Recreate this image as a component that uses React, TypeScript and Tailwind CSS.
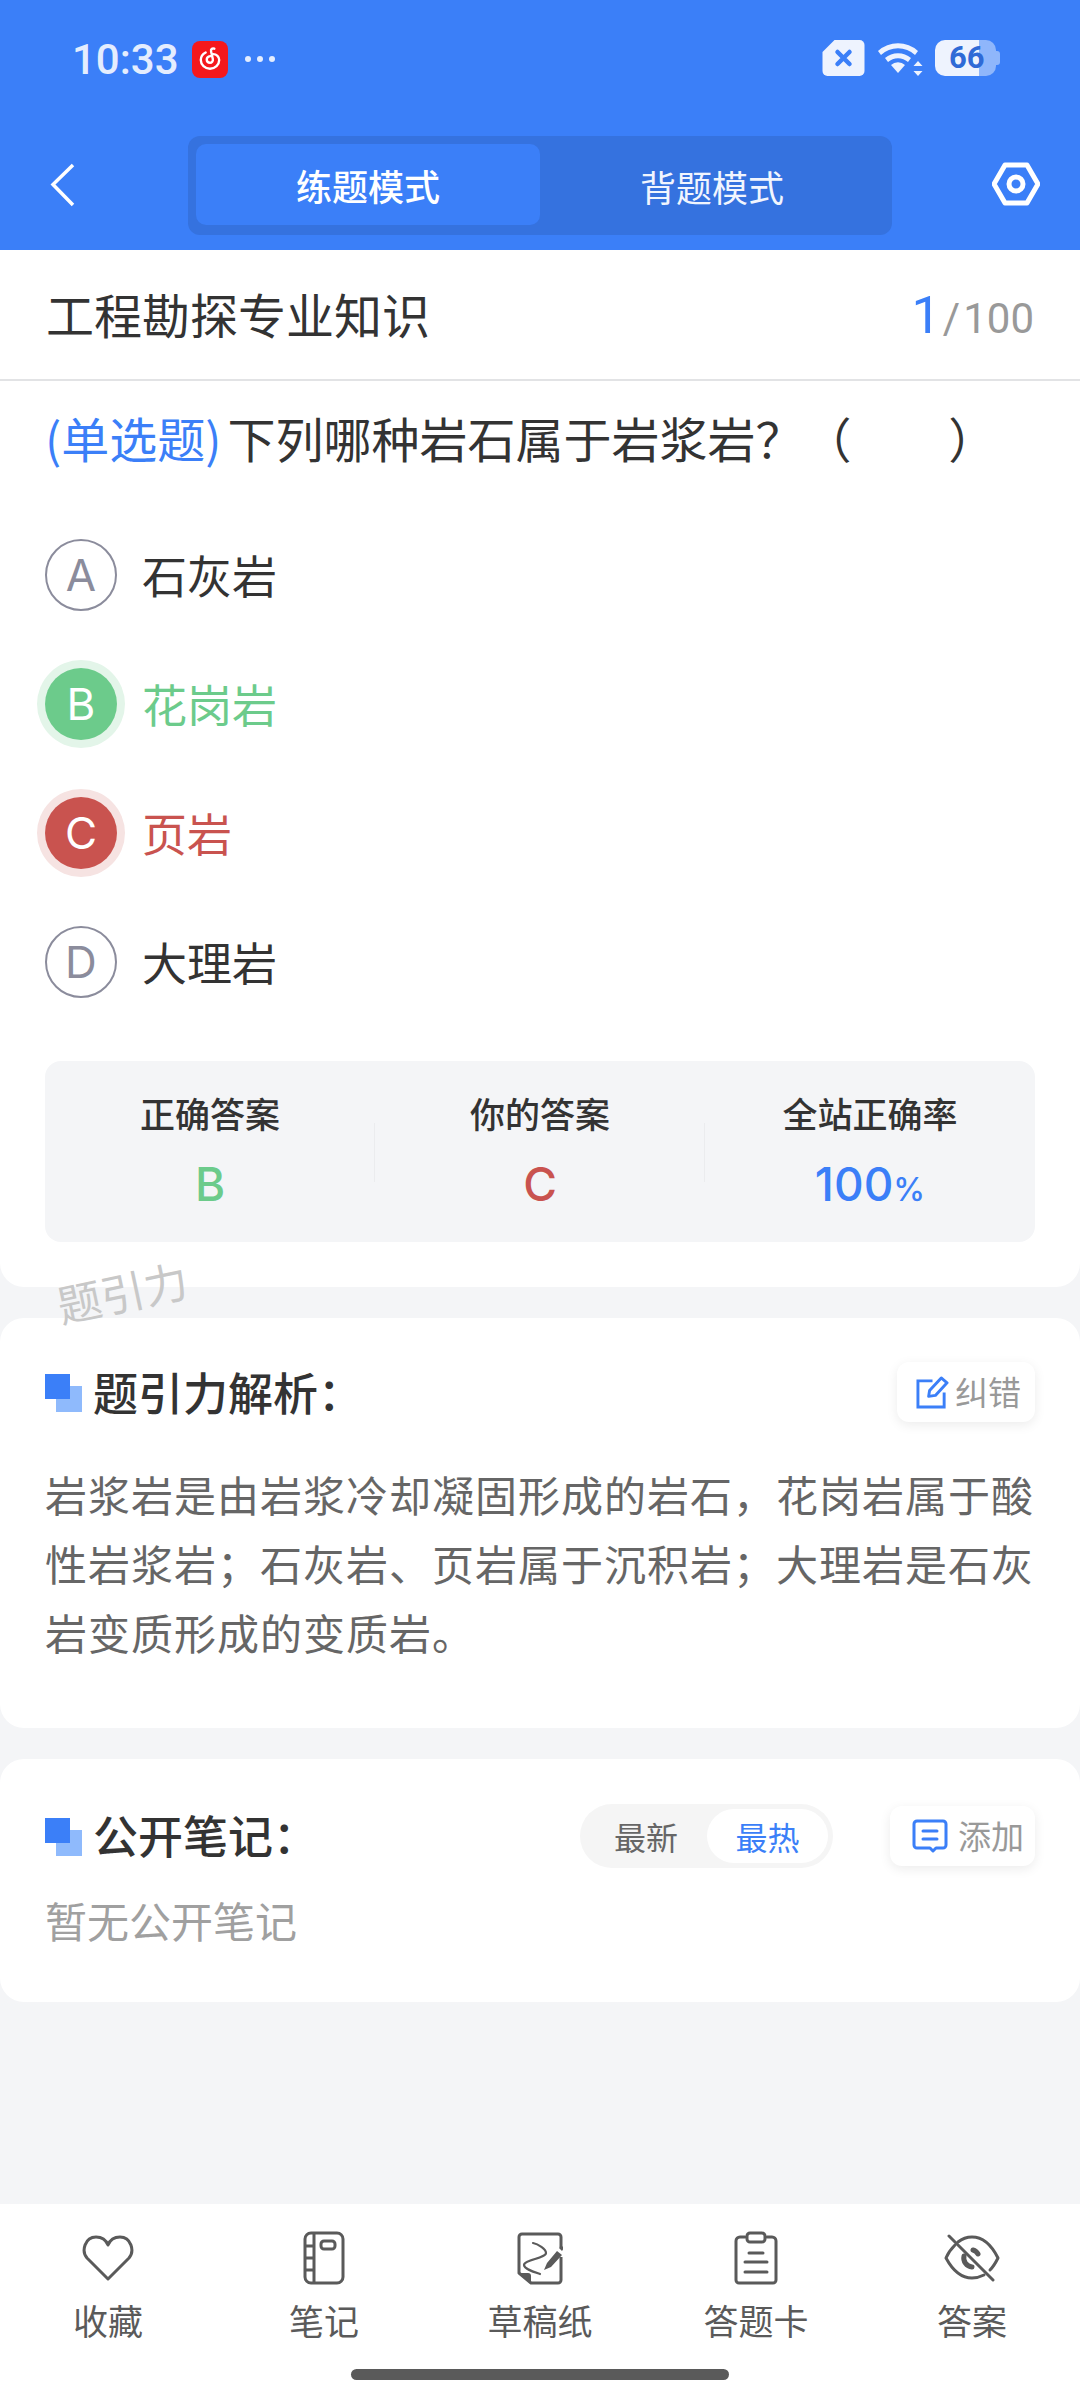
const font = { fontFamily: '"Noto Sans CJK SC", "Noto Sans", sans-serif' };
const latin = { fontFamily: '"Inter", "Noto Sans", sans-serif' };

function Square() {
  return (
    <span className="relative block w-[36px] h-[37px] shrink-0">
      <span className="absolute left-[11px] top-[12px] w-[26px] h-[26px] bg-[#8fbafc]" />
      <span className="absolute left-0 top-0 w-[25px] h-[25px] bg-[#3b7ff8]" />
    </span>
  );
}

function Option({ letter, text, state }: { letter: string; text: string; state?: "ok" | "bad" }) {
  const circle =
    state === "ok"
      ? "bg-[#6ccb8b] text-white shadow-[0_0_0_8px_#e3f5e9]"
      : state === "bad"
        ? "bg-[#c9534f] text-white shadow-[0_0_0_8px_#f6e3e2]"
        : "border-2 border-[#8b8c9c] text-[#8b8c9c]";
  const label = state === "ok" ? "text-[#6ccb8b]" : state === "bad" ? "text-[#c9534f]" : "text-[#333333]";
  return (
    <div className="flex items-center h-[129px]">
      <div style={latin} className={`w-[72px] h-[72px] rounded-full flex items-center justify-center text-[44px] ${circle}`}>{letter}</div>
      <div className={`ml-[25px] text-[45px] leading-none ${label}`}>{text}</div>
    </div>
  );
}

function Stat({ title, children, line }: { title: string; children: React.ReactNode; line?: boolean }) {
  return (
    <div className="relative flex-1 flex flex-col items-center pt-[29px]">
      <div className="text-[35px] leading-[46px] font-medium text-[#333333]">{title}</div>
      <div style={latin} className="mt-[20px] leading-[56px] text-[46px] font-medium">{children}</div>
      {line && <div className="absolute right-0 top-[62px] w-[1px] h-[59px] bg-[#ebecee]" />}
    </div>
  );
}

function NavItem({ label, children }: { label: string; children: React.ReactNode }) {
  return (
    <div className="flex-1 flex flex-col items-center">
      <div className="w-[60px] h-[60px] flex items-center justify-center">{children}</div>
      <div className="mt-[9px] text-[35px] leading-[46px] text-[#5a5a5a]">{label}</div>
    </div>
  );
}

export default function App() {
  return (
    <div style={font} className="w-[1080px] h-[2400px] bg-[#f4f5f7] flex flex-col overflow-hidden relative">
      <div className="bg-[#3b7ff8] h-[250px] shrink-0 flex flex-col">
        <div className="h-[136px] shrink-0 flex items-start justify-between pl-[72px] pr-[80px] pt-[40px]">
          <div className="flex items-center h-[38px]">
            <span className="text-[42px] font-medium text-[#e4edfe]" style={{ fontFamily: '"Roboto", sans-serif' }}>10:33</span>
            <span className="ml-[13px] w-[36px] h-[37px] rounded-[8px] bg-[#f5181c] flex items-center justify-center">
              <svg viewBox="0 0 24 24" className="w-[26px] h-[26px]" fill="none" stroke="white" strokeWidth="2.2" strokeLinecap="round">
                <path d="M16 2.500c-2-.6-3.500.5-3 2.500l1.600 7c.4 2-1 3.500-2.600 3.500-1.800 0-3-1.300-3-3 0-1.800 1.500-3 3.200-3.200M8 6C5 7.500 3.500 10 3.500 13c0 4.500 3.800 8 8.500 8s8.500-3.500 8.500-8c0-3-2.500-5.500-5.500-5.500" />
              </svg>
            </span>
            <span className="ml-[17px] flex gap-[6px]">
              <span className="w-[6px] h-[6px] rounded-full bg-[#e4edfe]" />
              <span className="w-[6px] h-[6px] rounded-full bg-[#e4edfe]" />
              <span className="w-[6px] h-[6px] rounded-full bg-[#e4edfe]" />
            </span>
          </div>
          <div className="flex items-center h-[36px] gap-[11px]">
            <svg viewBox="0 0 42 36" className="w-[43px] h-[36px]">
              <path d="M12 0h25a5 5 0 0 1 5 5v26a5 5 0 0 1-5 5H5a5 5 0 0 1-5-5V12z" fill="#eef3fe" />
              <path d="M15 12l12 12M27 12L15 24" stroke="#3b7ff8" strokeWidth="4.500" strokeLinecap="round" />
            </svg>
            <svg viewBox="0 0 46 36" className="w-[48px] h-[36px]">
              <path d="M1 11a30 30 0 0 1 40 0l-3 4a25 25 0 0 0-34 0zM8 18a20 20 0 0 1 26 0l-3 4a15 15 0 0 0-20 0zM14 25a10 10 0 0 1 14 0l-7 8z" fill="#eef3fe" />
              <path d="M41 21l4.500 5h-9zM41 36l4.500-5h-9z" fill="#eef3fe" />
            </svg>
            <span className="relative block w-[65px] h-[36px]">
              <span className="absolute left-[42px] top-0 w-[19px] h-[36px] rounded-r-[10px] bg-[#8fb6fb]" />
              <span className="absolute right-0 top-[11px] w-[4px] h-[14px] rounded-r-[3px] bg-[#8fb6fb]" />
              <span className="absolute left-0 top-0 w-[44px] h-[36px] rounded-l-[10px] bg-[#eef3fe]" />
              <span className="absolute left-[14px] top-0 text-[31px] leading-[36px] font-bold text-[#2f6ad6]" style={{ fontFamily: '"Roboto", sans-serif' }}>66</span>
            </span>
          </div>
        </div>
        <div className="flex items-start relative">
          <svg viewBox="0 0 26 44" className="absolute left-[50px] top-[27px] w-[26px] h-[44px]" fill="none" stroke="white" strokeWidth="3.500">
            <path d="M23 2L3 21.500 23 42" />
          </svg>
          <div className="ml-[188px] w-[704px] h-[99px] rounded-[12px] bg-[#3572df] p-[8px] flex items-stretch">
            <div className="w-[344px] h-[81px] rounded-[10px] bg-[#3b7ff8] flex items-center justify-center text-[36px] font-medium text-white">练题模式</div>
            <div className="flex-1 flex items-center justify-center text-[36px] text-[#f1f5fe]">背题模式</div>
          </div>
          <svg viewBox="0 0 48 44" className="absolute left-[992px] top-[26px] w-[48px] h-[44px]" fill="none" stroke="white" strokeWidth="5" strokeLinejoin="round">
            <path d="M13 3h22l11 19-11 19H13L2 22z" />
            <circle cx="24" cy="22" r="7" />
          </svg>
        </div>
      </div>

      <div className="bg-white rounded-b-[24px] px-[45px] h-[1037px] shrink-0 relative">
        <div className="-mx-[45px] px-[46px] h-[131px] border-b-2 border-[#e2e3e5] flex items-center justify-between">
          <div className="text-[48px] leading-[64px] text-[#333333] -mt-[3px]">工程勘探专业知识</div>
          <div className="flex items-baseline text-[#999999] mt-[3px]" style={{ fontFamily: '"Roboto", sans-serif' }}>
            <span className="text-[52px] text-[#3b7ff8]">1</span>
            <span className="ml-[2px] text-[42px]">/</span>
            <span className="ml-[3px] text-[42px]">100</span>
          </div>
        </div>
        <div className="h-[76px] mt-[18px] flex items-center text-[48px] text-[#333333] whitespace-pre">
          <span className="text-[#3b7ff8]">(单选题)</span>
          <span className="ml-[6px]">下列哪种岩石属于岩浆岩？（         ）</span>
        </div>
        <div className="mt-[35px]">
          <Option letter="A" text="石灰岩" />
          <Option letter="B" text="花岗岩" state="ok" />
          <Option letter="C" text="页岩" state="bad" />
          <Option letter="D" text="大理岩" />
        </div>
        <div className="mt-[35px] h-[181px] rounded-[16px] bg-[#f4f5f7] flex">
          <Stat title="正确答案" line><span className="text-[#6ccb8b]">B</span></Stat>
          <Stat title="你的答案" line><span className="text-[#c9534f]">C</span></Stat>
          <Stat title="全站正确率">
            <span className="text-[#3b7ff8]">100<span className="text-[32px]">%</span></span>
          </Stat>
        </div>
      </div>

      <div className="mt-[31px] bg-white rounded-[24px] h-[410px] shrink-0 px-[45px]">
        <div className="flex items-center justify-between pt-[44px]">
          <div className="flex items-center">
            <Square />
            <div className="ml-[12px] text-[45px] leading-[60px] font-medium text-[#333333]">题引力解析：</div>
          </div>
          <div className="h-[60px] w-[138px] rounded-[12px] bg-white shadow-[0_3px_12px_rgba(0,0,0,0.08)] flex items-center pl-[19px]">
            <svg viewBox="0 0 34 34" className="w-[33px] h-[33px]" fill="none" stroke="#3b7ff8" strokeWidth="3">
              <path d="M17 5H2v27h27V17" />
              <path d="M13 21l1-6L26 2l6 5-12 13z" strokeLinejoin="round" />
            </svg>
            <span className="ml-[6px] text-[33px] text-[#999999]">纠错</span>
          </div>
        </div>
        <div className="mt-[37px] text-[42px] leading-[69px] tracking-[1px] text-[#666666]">
          岩浆岩是由岩浆冷却凝固形成的岩石，花岗岩属于酸性岩浆岩；石灰岩、页岩属于沉积岩；大理岩是石灰岩变质形成的变质岩。
        </div>
      </div>

      <div className="mt-[31px] bg-white rounded-[24px] h-[243px] shrink-0 px-[45px]">
        <div className="flex items-center justify-between pt-[45px]">
          <div className="flex items-center">
            <Square />
            <div className="ml-[12px] -mt-[3px] text-[45px] leading-[60px] font-medium text-[#333333]">公开笔记：</div>
          </div>
          <div className="flex items-center">
            <div className="h-[64px] w-[253px] rounded-full bg-[#f5f5f5] p-[5px] flex items-center">
              <span className="w-[122px] text-center text-[32px] text-[#666666]">最新</span>
              <span className="w-[121px] h-[54px] rounded-full bg-white flex items-center justify-center text-[32px] text-[#3b7ff8]">最热</span>
            </div>
            <div className="ml-[57px] h-[60px] w-[145px] rounded-[12px] bg-white shadow-[0_3px_12px_rgba(0,0,0,0.08)] flex items-center pl-[22px]">
              <svg viewBox="0 0 36 34" className="w-[36px] h-[34px]" fill="none" stroke="#3b7ff8" strokeWidth="3" strokeLinecap="round" strokeLinejoin="round">
                <path d="M5 2h26a3 3 0 0 1 3 3v21a3 3 0 0 1-3 3h-7l-3 3-3-3H5a3 3 0 0 1-3-3V5a3 3 0 0 1 3-3z" />
                <path d="M11 12h14M11 20h14" />
              </svg>
              <span className="ml-[10px] text-[33px] text-[#999999]">添加</span>
            </div>
          </div>
        </div>
        <div className="mt-[22px] text-[42px] leading-[60px] text-[#a0a0a0]">暂无公开笔记</div>
      </div>

      <div className="absolute left-[56px] top-[1266px] text-[44px] leading-[50px] text-[#c8c8c8] -rotate-[12deg]">题引力</div>

      <div className="absolute left-0 right-0 bottom-0 h-[196px] bg-white pt-[24px]">
        <div className="flex">
          <NavItem label="收藏">
            <svg viewBox="0 0 52 46" className="w-[52px] h-[46px]" fill="none" stroke="#5a5a5a" strokeWidth="3" strokeLinejoin="round">
              <path d="M26 44L5 23C-1 16 3 2 14 2c6 0 10 3 12 8 2-5 6-8 12-8 11 0 15 14 9 21z" />
            </svg>
          </NavItem>
          <NavItem label="笔记">
            <svg viewBox="0 0 42 54" className="w-[42px] h-[54px]" fill="none" stroke="#5a5a5a" strokeWidth="3">
              <rect x="2" y="2" width="38" height="50" rx="6" />
              <path d="M11 2v50M2 15h9M2 27h9M2 39h9" />
              <rect x="18" y="10" width="14" height="8" rx="3" />
            </svg>
          </NavItem>
          <NavItem label="草稿纸">
            <svg viewBox="0 0 46 53" className="w-[46px] h-[53px]" fill="none" stroke="#5a5a5a" strokeWidth="3" strokeLinejoin="round">
              <path d="M44 15V5a3 3 0 0 0-3-3H5a3 3 0 0 0-3 3v36l12 10h27a3 3 0 0 0 3-3V25" />
              <path d="M2 41h9q3 0 3 3v7z" fill="#5a5a5a" stroke="none" />
              <path d="M16 11c5 1 13 6 13 10 0 5-22 7-22 12 0 4 10 7 16 9" strokeWidth="2.200" strokeLinecap="round" />
              <path d="M30 31l10-12 5 4-11 12-7 3zM42 16l2-3 3 3-2 3z" fill="#5a5a5a" stroke="none" />
            </svg>
          </NavItem>
          <NavItem label="答题卡">
            <svg viewBox="0 0 46 54" className="w-[46px] h-[54px]" fill="none" stroke="#5a5a5a" strokeWidth="3" strokeLinecap="round">
              <path d="M12 6H7a4 4 0 0 0-4 4v39a3 3 0 0 0 3 3h34a3 3 0 0 0 3-3V10a4 4 0 0 0-4-4h-5" />
              <rect x="14" y="2" width="18" height="9" rx="3" />
              <path d="M16 22h14M12 31h22M12 41h22" />
            </svg>
          </NavItem>
          <NavItem label="答案">
            <svg viewBox="0 0 56 48" className="w-[56px] h-[48px]" fill="none" stroke="#5a5a5a" strokeWidth="3" strokeLinecap="round" strokeLinejoin="round">
              <path d="M14 8C19 4 24 3 28 3c10 0 19 7 26 21-2 4-4 8-8 12M40 41c-4 2-8 3-12 3-10 0-19-7-26-20 2-5 5-9 9-13" />
              <path d="M5 2l44 44" />
              <path d="M34 20a8 8 0 0 0-5-4M20 22a9 9 0 0 0 8 11" strokeWidth="5" />
            </svg>
          </NavItem>
        </div>
        <div className="absolute left-[351px] bottom-[20px] w-[378px] h-[11px] rounded-full bg-[#5a5a5a]" />
      </div>
    </div>
  );
}
